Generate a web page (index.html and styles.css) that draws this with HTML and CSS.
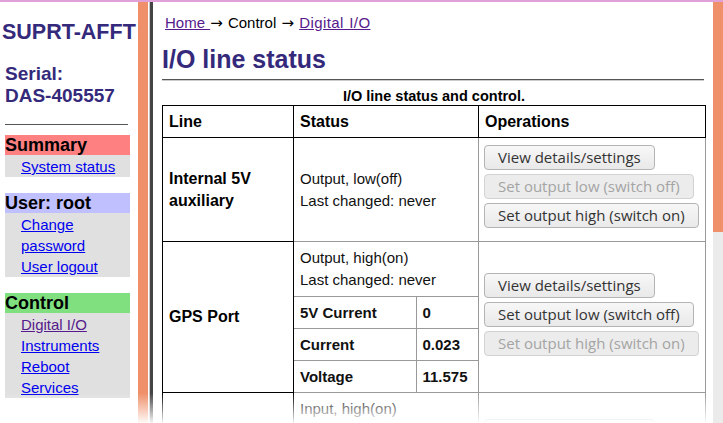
FILE: index.html
```html
<!DOCTYPE html>
<html lang="en">
<head>
<meta charset="utf-8">
<title>I/O line status</title>
<link rel="stylesheet" href="styles.css">
</head>
<body>
<div class="topbar"></div>
<div class="page">
  <aside class="sidebar">
    <div class="brand">SUPRT-AFFT</div>
    <div class="serial">Serial:<br>DAS-405557</div>
    <hr class="side-rule">
    <section class="menu">
      <div class="menu-head head-summary">Summary</div>
      <ul class="menu-links">
        <li><a href="#">System status</a></li>
      </ul>
    </section>
    <section class="menu">
      <div class="menu-head head-user">User: root</div>
      <ul class="menu-links">
        <li><a href="#">Change password</a></li>
        <li><a href="#">User logout</a></li>
      </ul>
    </section>
    <section class="menu">
      <div class="menu-head head-control">Control</div>
      <ul class="menu-links">
        <li><a href="#" class="visited">Digital I/O</a></li>
        <li><a href="#">Instruments</a></li>
        <li><a href="#">Reboot</a></li>
        <li><a href="#">Services</a></li>
      </ul>
    </section>
  </aside>
  <div class="stripe"></div>
  <main class="main">
    <div class="crumbs"><a href="#" class="visited">Home </a><span class="arrow">&rarr;</span> Control <span class="arrow">&rarr;</span> <a href="#" class="visited crumb-last">Digital I/O</a></div>
    <h1 class="title">I/O line status</h1>
    <hr class="rule">
    <table class="io">
      <caption>I/O line status and control.</caption>
      <colgroup>
        <col class="c-line"><col class="c-status"><col class="c-ops">
      </colgroup>
      <thead>
        <tr><th class="head">Line</th><th class="head">Status</th><th class="head">Operations</th></tr>
      </thead>
      <tbody>
        <tr>
          <th class="line">Internal 5V auxiliary</th>
          <td class="status">Output, low(off)<br>Last changed: never</td>
          <td class="ops">
            <div class="btn-stack">
              <button type="button">View details/settings</button>
              <button type="button" disabled>Set output low (switch off)</button>
              <button type="button">Set output high (switch on)</button>
            </div>
          </td>
        </tr>
        <tr>
          <th class="line">GPS Port</th>
          <td class="nested">
            <table class="sub">
              <colgroup><col class="c-key"><col class="c-val"></colgroup>
              <tr><td class="desc" colspan="2">Output, high(on)<br>Last changed: never</td></tr>
              <tr><td class="kv">5V Current</td><td class="kv">0</td></tr>
              <tr><td class="kv">Current</td><td class="kv">0.023</td></tr>
              <tr><td class="kv">Voltage</td><td class="kv">11.575</td></tr>
            </table>
          </td>
          <td class="ops">
            <div class="btn-stack">
              <button type="button">View details/settings</button>
              <button type="button">Set output low (switch off)</button>
              <button type="button" disabled>Set output high (switch on)</button>
            </div>
          </td>
        </tr>
        <tr>
          <th class="line">PPS input</th>
          <td class="nested">
            <table class="sub">
              <colgroup><col class="c-key"><col class="c-val"></colgroup>
              <tr><td class="desc" colspan="2">Input, high(on)<br>Last changed: never<br>Pulse count: 0</td></tr>
              <tr><td class="kv">Level</td><td class="kv">1</td></tr>
              <tr><td class="kv">Voltage</td><td class="kv">3.301</td></tr>
            </table>
          </td>
          <td class="ops">
            <div class="btn-stack">
              <button type="button">View details/settings</button>
              <button type="button" disabled>Set output low (switch off)</button>
              <button type="button" disabled>Set output high (switch on)</button>
            </div>
          </td>
        </tr>
      </tbody>
    </table>
  </main>
</div>
<div class="scrollbar"><div class="scroll-thumb"></div></div>
<div class="fade"></div>
</body>
</html>
```

FILE: styles.css
```css
html, body {
  margin: 0;
  padding: 0;
}
body {
  font-family: "Liberation Sans", Arial, sans-serif;
  color: #111;
  background: #fff;
  overflow: hidden;
  height: 423px;
}
a {
  color: #0000ee;
}
a.visited {
  color: #551a8b;
}
.topbar {
  height: 2px;
  background: #e0a0d8;
}
.page {
  display: flex;
  height: 421px;
}

/* sidebar */
.sidebar {
  width: 138px;
  flex: none;
  box-sizing: border-box;
  padding: 18px 8px 0 5px;
}
.brand {
  font-weight: bold;
  font-size: 21.5px;
  line-height: 24px;
  color: #34297b;
  margin-left: -3px;
  white-space: nowrap;
}
.serial {
  margin-top: 19px;
  font-weight: bold;
  font-size: 19px;
  line-height: 22px;
  color: #34297b;
}
.side-rule {
  margin: 17px 2px 10px 0;
  border: 0;
  border-top: 1px solid #555;
  height: 0;
}
.menu {
  margin-bottom: 16px;
}
.menu-head {
  font-weight: bold;
  font-size: 18px;
  line-height: 20px;
  color: #000;
}
.head-summary { background: #ff8080; }
.head-user { background: #c0c0ff; }
.head-control { background: #80e080; }
.menu-links {
  list-style: none;
  margin: 0;
  padding: 1px 0 0 16px;
  background: #e0e0e0;
  font-size: 15px;
  line-height: 21px;
}

.stripe {
  width: 10px;
  flex: none;
  background: #f0906a;
}

/* main */
.main {
  flex: none;
  width: 563px;
  box-sizing: border-box;
  margin-left: 2px;
  border-left: 3px solid #444;
  box-shadow: -1px 0 0 #c8c8c8;
  padding: 11px 8px 0 9px;
}
.crumbs {
  font-size: 15px;
  line-height: 20px;
  padding-left: 3px;
  color: #000;
  word-spacing: 1px;
}
.arrow {
  font-family: "DejaVu Sans", sans-serif;
  font-size: 15px;
}
.crumb-last {
  letter-spacing: 0.4px;
}
.title {
  margin: 11px 0 0;
  font-size: 25px;
  line-height: 30px;
  font-weight: bold;
  color: #34297b;
}
.rule {
  margin: 5px 1px 0 0;
  border: 0;
  border-top: 1px solid #555;
  border-bottom: 1px solid #ccc;
  height: 0;
}

.io {
  margin-top: 6px;
  width: 543px;
  border-collapse: collapse;
  table-layout: fixed;
}
.io caption {
  font-weight: bold;
  font-size: 14.5px;
  line-height: 18px;
  color: #000;
}
.c-line { width: 131px; }
.c-status { width: 185px; }
.c-ops { width: 227px; }
.io th {
  border: 1px solid #000;
  text-align: left;
  font-weight: bold;
  font-size: 16px;
  color: #000;
}
.io th.head {
  padding: 5px 6px;
  line-height: 21px;
}
.io th.line {
  padding: 0 6px;
  line-height: 22px;
  vertical-align: middle;
}
.io td {
  border: 1px solid #999;
  vertical-align: middle;
}
.io td.status {
  padding: 5px 6px;
  font-size: 15px;
  line-height: 22px;
}
.io td.nested {
  padding: 0;
}
.sub {
  width: 100%;
  border-collapse: collapse;
  border-style: hidden;
  table-layout: fixed;
}
.c-key { width: 122px; }
.sub td {
  border: 1px solid #999;
  padding: 5px 6px;
}
.sub td.desc {
  font-size: 15px;
  line-height: 22px;
}
.sub td.kv {
  font-weight: bold;
  font-size: 15px;
  line-height: 21px;
}
.io td.ops {
  padding: 7px 6px 13px 5px;
}
.btn-stack {
  display: flex;
  flex-direction: column;
  align-items: flex-start;
  gap: 4px;
}
.btn-stack button {
  font-family: "Open Sans", "Noto Sans", sans-serif;
  font-size: 15px;
  line-height: 17px;
  padding: 3px 13px;
  border: 1px solid #b4b4b4;
  border-radius: 4px;
  background: linear-gradient(#f7f7f7, #e9e9e9);
  color: #333;
  white-space: nowrap;
}
.btn-stack button:disabled {
  color: #a4a4a4;
  border-color: #d2d2d2;
  background: #ececec;
}

/* overlays */
.scrollbar {
  position: fixed;
  top: 2px;
  right: 0;
  bottom: 0;
  width: 10px;
  background: #ebebeb;
}
.scroll-thumb {
  height: 230px;
  background: #f0906a;
}
.fade {
  position: fixed;
  left: 0;
  right: 10px;
  bottom: 0;
  height: 30px;
  background: linear-gradient(rgba(255,255,255,0), rgba(255,255,255,0.95));
  pointer-events: none;
}
```
